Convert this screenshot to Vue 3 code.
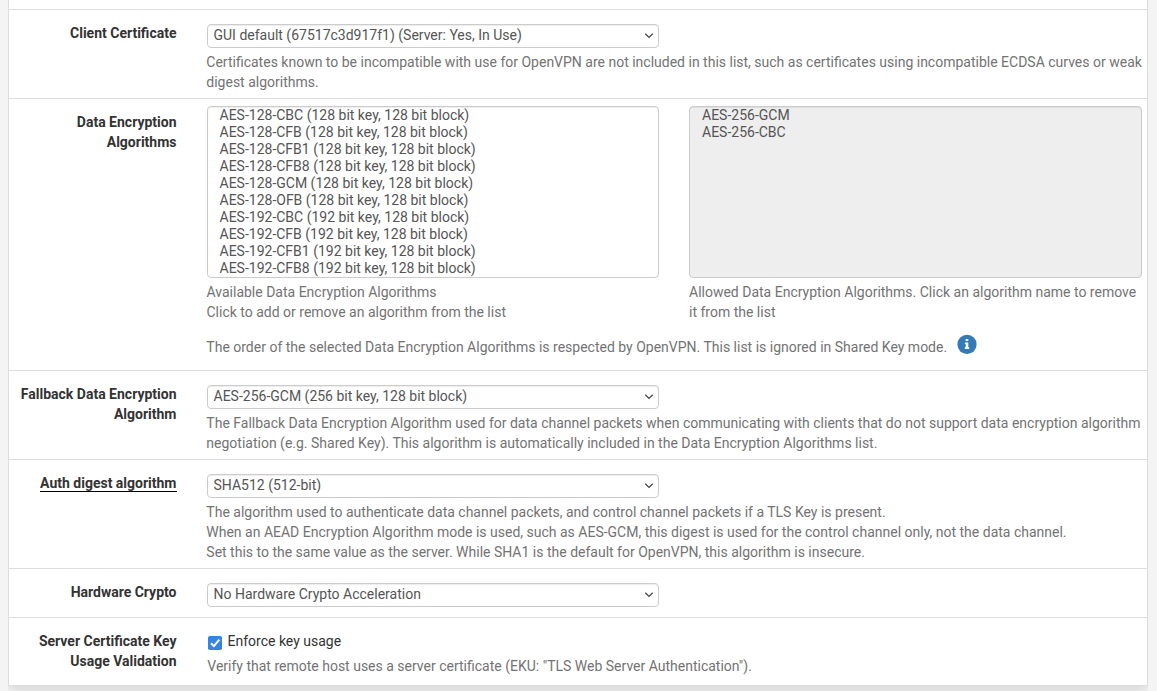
<script setup>
const available = [
  ...['CBC', 'CFB', 'CFB1', 'CFB8', 'GCM', 'OFB'].map((m) => `AES-128-${m} (128 bit key, 128 bit block)`),
  ...['CBC', 'CFB', 'CFB1', 'CFB8'].map((m) => `AES-192-${m} (192 bit key, 128 bit block)`),
]
const allowed = ['AES-256-GCM', 'AES-256-CBC']

const rows = [
  {
    id: 'cert',
    label: ['Client Certificate'],
    value: 'GUI default (67517c3d917f1) (Server: Yes, In Use)',
    help: [
      'Certificates known to be incompatible with use for OpenVPN are not included in this list, such as certificates using incompatible ECDSA curves or weak',
      'digest algorithms.',
    ],
  },
  { id: 'ciphers', label: ['Data Encryption', 'Algorithms'] },
  {
    id: 'fallback',
    label: ['Fallback Data Encryption', 'Algorithm'],
    value: 'AES-256-GCM (256 bit key, 128 bit block)',
    help: [
      'The Fallback Data Encryption Algorithm used for data channel packets when communicating with clients that do not support data encryption algorithm',
      'negotiation (e.g. Shared Key). This algorithm is automatically included in the Data Encryption Algorithms list.',
    ],
  },
  {
    id: 'digest',
    label: ['Auth digest algorithm'],
    required: true,
    value: 'SHA512 (512-bit)',
    help: [
      'The algorithm used to authenticate data channel packets, and control channel packets if a TLS Key is present.',
      'When an AEAD Encryption Algorithm mode is used, such as AES-GCM, this digest is used for the control channel only, not the data channel.',
      'Set this to the same value as the server. While SHA1 is the default for OpenVPN, this algorithm is insecure.',
    ],
  },
  { id: 'hardware', label: ['Hardware Crypto'], value: 'No Hardware Crypto Acceleration' },
  { id: 'eku', label: ['Server Certificate Key', 'Usage Validation'] },
]
</script>

<template>
  <div class="page">
    <div class="panel">
      <div class="previous"></div>
      <div v-for="row in rows" :key="row.id" class="row" :class="row.id">
        <div class="label">
          <div v-for="line in row.label" :key="line">
            <span :class="{ required: row.required }">{{ line }}</span>
          </div>
        </div>
        <div class="content">
          <template v-if="row.value">
            <div class="select">
              <span>{{ row.value }}</span>
              <svg class="arrow" width="10" height="8" viewBox="0 0 10 8">
                <path d="M1.3 1.7 L5 5.4 L8.7 1.7" fill="none" stroke="#4a4a4a" stroke-width="1.35" />
              </svg>
            </div>
            <div v-if="row.help" class="help">
              <div v-for="line in row.help" :key="line">{{ line }}</div>
            </div>
          </template>

          <template v-else-if="row.id === 'ciphers'">
            <div class="lists">
              <div>
                <div class="listbox">
                  <div v-for="a in available" :key="a">{{ a }}</div>
                </div>
                <div class="help">
                  <div>Available Data Encryption Algorithms</div>
                  <div>Click to add or remove an algorithm from the list</div>
                </div>
              </div>
              <div>
                <div class="listbox disabled">
                  <div v-for="a in allowed" :key="a">{{ a }}</div>
                </div>
                <div class="help">
                  <div>Allowed Data Encryption Algorithms. Click an algorithm name to remove</div>
                  <div>it from the list</div>
                </div>
              </div>
            </div>
            <div class="order">
              <span>The order of the selected Data Encryption Algorithms is respected by OpenVPN. This list is ignored in Shared Key mode.</span>
              <svg class="info" width="20" height="20" viewBox="0 0 20 20">
                <circle cx="10" cy="10.4" r="9.6" fill="#337ab7" />
                <path d="M8.7 5h2.6v2.1H8.7z M7.8 8.4h3.5v4.8h.9v1.7H7.8v-1.7h.9V10h-.9z" fill="#fff" />
              </svg>
            </div>
          </template>

          <template v-else>
            <div class="check">
              <svg class="box" width="14" height="14" viewBox="0 0 14 14">
                <rect width="14" height="14" rx="1.8" fill="#3584e4" />
                <path d="M3 7.2 L5.9 10.1 L11.3 3.7" fill="none" stroke="#fff" stroke-width="2" />
              </svg>
              <span>Enforce key usage</span>
            </div>
            <div class="help">Verify that remote host uses a server certificate (EKU: "TLS Web Server Authentication").</div>
          </template>
        </div>
      </div>
    </div>
  </div>
</template>

<style>
body {
  background: #f4f4f4;
}
</style>

<style scoped>
.page {
  box-sizing: border-box;
  height: 691px;
  padding: 0 9px 0 8px;
  overflow: hidden;
  background: #f4f4f4;
  font: 14px/20px Roboto, sans-serif;
  color: #333;
  white-space: nowrap;
}
.panel {
  box-sizing: border-box;
  height: 686px;
  background: #fff;
  border: 1px solid #ddd;
  border-top: 0;
  box-shadow: 0 6px 12px rgba(0, 0, 0, 0.11);
  clip-path: inset(0 0 -20px 0);
}
.previous {
  height: 9px;
}
.row {
  box-sizing: border-box;
  display: flex;
  height: 89px;
  padding-top: 13px;
  border-top: 1px solid #ddd;
}
.row.ciphers {
  height: 272px;
}
.row.digest {
  height: 109px;
}
.row.hardware {
  height: 49px;
}
.row.eku {
  height: 68px;
}
.label {
  width: 167.5px;
  margin-right: 30px;
  font-weight: 700;
  text-align: right;
}
.required {
  display: inline-block;
  height: 19px;
  box-sizing: border-box;
  border-bottom: 1px solid #000;
}
.content {
  width: 935.5px;
}
.select {
  box-sizing: border-box;
  display: flex;
  align-items: center;
  justify-content: space-between;
  width: 452px;
  height: 24px;
  margin-top: 1px;
  padding: 0 3.5px 2px 6px;
  border: 1px solid #ccc;
  border-radius: 4px;
  box-shadow: inset 0 1px 1px rgba(0, 0, 0, 0.075);
  color: #555;
}
.arrow {
  margin-top: 2px;
}
.help {
  margin-top: 4px;
  margin-left: -0.2px;
  color: #737373;
}
.lists {
  display: grid;
  grid-template-columns: 452px 453px;
  gap: 30.5px;
  margin-top: -6px;
}
.listbox {
  box-sizing: border-box;
  height: 172px;
  padding: 0 12px;
  border: 1px solid #ccc;
  border-radius: 4px;
  box-shadow: inset 0 1px 1px rgba(0, 0, 0, 0.075);
  line-height: 17px;
  color: #555;
}
.lists .help {
  margin-left: 0;
}
.listbox.disabled {
  background: #eee;
}
.order {
  display: flex;
  margin-top: 15px;
  margin-left: -0.2px;
  color: #737373;
}
.info {
  margin: -3px 0 0 9.5px;
}
.check {
  display: flex;
  align-items: flex-start;
  gap: 5.5px;
  padding-left: 1.5px;
}
.box {
  margin-top: 5px;
}
.eku .help {
  margin-top: 5px;
  padding-left: 1px;
}
</style>
